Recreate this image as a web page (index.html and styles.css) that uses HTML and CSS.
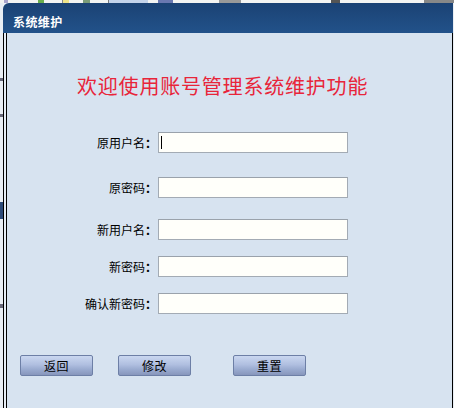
FILE: index.html
```html
<!DOCTYPE html>
<html lang="zh-CN">
<head>
<meta charset="utf-8">
<title>系统维护</title>
<link rel="stylesheet" href="styles.css">
</head>
<body>
<div class="page">
  <div class="toolbar">
    <span class="tb tb-purple"></span>
    <span class="tb tb-green"></span>
    <span class="tb tb-yellow"></span>
    <span class="tb tb-olive"></span>
    <span class="tb tb-blue"></span>
    <span class="tb tb-dark"></span>
    <span class="tb tb-dark2"></span>
    <span class="tb tb-dark3"></span>
    <span class="tb tb-dark4"></span>
  </div>
  <div class="main">
    <div class="side">
      <span class="mark mark-1"></span>
      <span class="mark mark-2"></span>
      <span class="mark mark-3"></span>
      <span class="mark mark-4"></span>
    </div>
    <div class="dialog">
      <div class="header">系统维护</div>
      <div class="frame">
        <div class="content">
          <h1 class="welcome">欢迎使用账号管理系统维护功能</h1>
          <div class="form">
            <div class="row row-1">
              <label class="label">原用户名<span class="colon">：</span></label>
              <span class="field">
                <input class="input" type="text">
                <span class="caret"></span>
              </span>
            </div>
            <div class="row row-2">
              <label class="label">原密码<span class="colon">：</span></label>
              <span class="field"><input class="input" type="password"></span>
            </div>
            <div class="row row-3">
              <label class="label">新用户名<span class="colon">：</span></label>
              <span class="field"><input class="input" type="text"></span>
            </div>
            <div class="row row-4">
              <label class="label">新密码<span class="colon">：</span></label>
              <span class="field"><input class="input" type="password"></span>
            </div>
            <div class="row row-5">
              <label class="label">确认新密码<span class="colon">：</span></label>
              <span class="field"><input class="input" type="password"></span>
            </div>
          </div>
          <div class="buttons">
            <button class="btn btn-back">返回</button>
            <button class="btn btn-edit">修改</button>
            <button class="btn btn-reset">重置</button>
          </div>
        </div>
      </div>
    </div>
    <div class="side-right"></div>
  </div>
</div>
</body>
</html>
```

FILE: styles.css
```css
* { box-sizing: border-box; }
html, body {
  margin: 0;
  padding: 0;
  width: 454px;
  height: 408px;
  overflow: hidden;
  background: #eef2f7;
  font-family: "Noto Sans CJK SC", "Noto Sans", sans-serif;
  font-size: 12px;
  color: #000;
}
.page {
  display: flex;
  flex-direction: column;
  height: 408px;
}
.toolbar {
  height: 3px;
  display: flex;
  align-items: stretch;
  background: #f4f4f2;
  flex: none;
}
.tb { display: block; height: 3px; }
.tb-purple { width: 5px; margin-left: 4px; background: #a9a4cc; }
.tb-green { width: 7px; margin-left: 30px; background: #6aae4c; }
.tb-yellow { width: 8px; margin-left: 18px; background: #f0e48a; border-left: 1px solid #888; }
.tb-olive { width: 8px; margin-left: 14px; background: #7c9c78; }
.tb-blue { width: 48px; margin-left: 18px; background: #c4d3ea; border-left: 1px solid #777; }
.tb-dark { width: 18px; margin-left: 10px; background: #6a78b0; }
.tb-dark2 { width: 26px; margin-left: 46px; background: #999; }
.tb-dark3 { width: 10px; margin-left: 90px; background: #555; }
.tb-dark4 { width: 36px; margin-left: 84px; background: #888; }

.main {
  flex: 1;
  display: flex;
  min-height: 0;
}
.side {
  width: 3px;
  flex: none;
  display: flex;
  flex-direction: column;
  background: #e9eef4;
}
.mark { display: block; width: 3px; background: #667; }
.mark-1 { height: 3px; margin-top: 75px; }
.mark-2 { height: 3px; margin-top: 33px; }
.mark-3 { height: 17px; margin-top: 85px; background: #2c4a78; }
.mark-4 { height: 4px; margin-top: 85px; }

.dialog {
  width: 450px;
  flex: none;
  display: flex;
  flex-direction: column;
}
.header {
  height: 30px;
  flex: none;
  background: linear-gradient(#1b4274, #22528a);
  border-top-left-radius: 6px;
  color: #fff;
  font-weight: bold;
  font-size: 12px;
  line-height: 14px;
  padding: 12px 0 0 10px;
  letter-spacing: 0.4px;
}
.frame {
  flex: 1;
  display: flex;
  border-left: 1px solid #000;
  border-right: 1px solid #000;
  background: #e6edf5;
  padding-left: 2px;
}
.content {
  flex: 1;
  border-left: 1px solid #000;
  background: #d7e3f0;
  padding-top: 41px;
}
.welcome {
  margin: 0 0 0 70px;
  font-size: 20px;
  line-height: 24px;
  font-weight: normal;
  letter-spacing: 0.8px;
  color: #e8253a;
  white-space: nowrap;
}
.form {
  display: flex;
  flex-direction: column;
}
.row {
  display: flex;
  align-items: center;
  height: 21px;
}
.row-1 { margin-top: 34px; }
.row-2 { margin-top: 24px; }
.row-3 { margin-top: 21px; }
.row-4 { margin-top: 16px; }
.row-5 { margin-top: 16px; }
.label {
  width: 150px;
  text-align: right;
  font-size: 12px;
  line-height: 14px;
  white-space: nowrap;
}
.colon {
  font-family: "Noto Sans CJK JP", "Noto Sans CJK SC", sans-serif;
  font-weight: bold;
}
.field {
  position: relative;
  display: block;
  margin-left: 1px;
  width: 190px;
  height: 21px;
}
.input {
  display: block;
  width: 190px;
  height: 21px;
  margin: 0;
  padding: 0 3px;
  border: 1px solid #a3abb4;
  border-top-color: #9aa2ab;
  background: #fffffa;
  font-family: inherit;
  font-size: 12px;
  outline: none;
}
.caret {
  position: absolute;
  left: 3px;
  top: 4px;
  width: 1px;
  height: 13px;
  background: #000;
}
.buttons {
  display: flex;
  margin-top: 41px;
  padding-left: 13px;
}
.btn {
  width: 73px;
  height: 21px;
  margin: 0;
  padding: 0;
  border: 1px solid #6d7fa6;
  border-radius: 2px;
  background: linear-gradient(#cad7f0 0%, #b0bfe0 45%, #9aabd0 70%, #8796bc 100%);
  font-family: inherit;
  font-size: 12px;
  line-height: 19px;
  color: #000;
  letter-spacing: 0.5px;
}
.btn-edit { margin-left: 25px; }
.btn-reset { margin-left: 42px; }
.side-right {
  width: 1px;
  flex: none;
  background: #e9eef4;
}
```
